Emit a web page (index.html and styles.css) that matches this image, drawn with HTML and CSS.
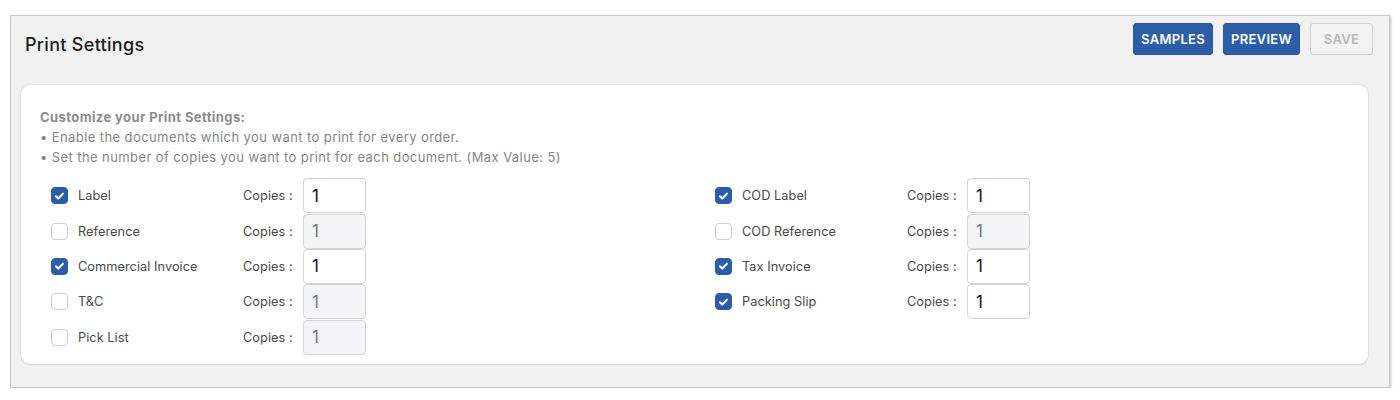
FILE: index.html
```html
<!DOCTYPE html>
<html>
<head>
<meta charset="utf-8">
<link rel="stylesheet" href="styles.css">
</head>
<body>
<div class="panel">
  <div class="header">
    <h1 class="title">Print Settings</h1>
    <div class="actions">
      <button class="btn btn-primary">SAMPLES</button>
      <button class="btn btn-primary">PREVIEW</button>
      <button class="btn btn-disabled">SAVE</button>
    </div>
  </div>
  <div class="card">
    <div class="intro">
      <div class="intro-title">Customize your Print Settings:</div>
      <div class="intro-line">• Enable the documents which you want to print for every order.</div>
      <div class="intro-line">• Set the number of copies you want to print for each document. (Max Value: 5)</div>
    </div>
    <div class="columns">
      <div class="col">
        <div class="row"><span class="cb on"><svg viewBox="0 0 16 16"><path d="M4.2 8.3l2.5 2.4 5-5.2"/></svg></span><span class="name">Label</span><span class="copies">Copies :</span><span class="num">1</span></div>
        <div class="row"><span class="cb"></span><span class="name">Reference</span><span class="copies">Copies :</span><span class="num off">1</span></div>
        <div class="row"><span class="cb on"><svg viewBox="0 0 16 16"><path d="M4.2 8.3l2.5 2.4 5-5.2"/></svg></span><span class="name">Commercial Invoice</span><span class="copies">Copies :</span><span class="num">1</span></div>
        <div class="row"><span class="cb"></span><span class="name">T&amp;C</span><span class="copies">Copies :</span><span class="num off">1</span></div>
        <div class="row"><span class="cb"></span><span class="name">Pick List</span><span class="copies">Copies :</span><span class="num off">1</span></div>
      </div>
      <div class="col col-right">
        <div class="row"><span class="cb on"><svg viewBox="0 0 16 16"><path d="M4.2 8.3l2.5 2.4 5-5.2"/></svg></span><span class="name">COD Label</span><span class="copies">Copies :</span><span class="num">1</span></div>
        <div class="row"><span class="cb"></span><span class="name">COD Reference</span><span class="copies">Copies :</span><span class="num off">1</span></div>
        <div class="row"><span class="cb on"><svg viewBox="0 0 16 16"><path d="M4.2 8.3l2.5 2.4 5-5.2"/></svg></span><span class="name">Tax Invoice</span><span class="copies">Copies :</span><span class="num">1</span></div>
        <div class="row"><span class="cb on"><svg viewBox="0 0 16 16"><path d="M4.2 8.3l2.5 2.4 5-5.2"/></svg></span><span class="name">Packing Slip</span><span class="copies">Copies :</span><span class="num">1</span></div>
      </div>
    </div>
  </div>
</div>
</body>
</html>
```

FILE: styles.css
```css
* { box-sizing: border-box; }
html, body { margin: 0; padding: 0; background: #fff; }
body {
  font-family: Inter, "Noto Sans", "Liberation Sans", sans-serif;
  color: #333;
  padding: 15px 10px 0 10px;
}
.panel {
  width: 1380px;
  height: 373px;
  background: #f1f1f1;
  border: 1px solid #c8c8c8;
  box-shadow: 1px 1px 2px rgba(0,0,0,0.25);
  display: flex;
  flex-direction: column;
}
.header {
  display: flex;
  align-items: flex-start;
  justify-content: space-between;
  padding: 7px 16px 0 14px;
  height: 69px;
}
.title {
  margin: 0;
  margin-top: 11px;
  font-size: 18px;
  font-weight: 500;
  color: #1c1c1c;
  letter-spacing: 0.3px;
}
.actions { display: flex; gap: 10px; }
.btn {
  height: 32px;
  border-radius: 3px;
  font-family: inherit;
  font-size: 13px;
  font-weight: 600;
  letter-spacing: 0.3px;
  padding: 0;
  border: 1px solid transparent;
}
.btn-primary {
  background: #2c5ea8;
  border-color: #2a589e;
  color: #fff;
}
.btn-primary:first-child { width: 80px; }
.btn-primary:nth-child(2) { width: 77px; }
.btn-disabled {
  width: 63px;
  background: #f3f3f3;
  border-color: #cfcfcf;
  color: #b9b9b9;
}
.card {
  margin: 0 21px 0 10px;
  height: 279px;
  background: #fff;
  border-radius: 9px;
  box-shadow: 0 0 2px rgba(0,0,0,0.18), 0 1px 2px rgba(0,0,0,0.08);
  padding: 22px 19px 0 19px;
}
.intro { font-size: 13px; line-height: 20px; color: #8a8a8a; letter-spacing: 0.41px; }
.intro-title { font-weight: 700; color: #8c8c8c; }
.intro-line { color: #858585; }
.columns {
  display: grid;
  grid-template-columns: 664px 1fr;
  margin-top: 11px;
  padding-left: 11px;
}
.row {
  display: flex;
  align-items: center;
  height: 35.4px;
  font-size: 12.75px;
  color: #4a4a4a;
  letter-spacing: 0.05px;
}
.cb {
  width: 17px;
  height: 17px;
  border: 1px solid #cfcfcf;
  border-radius: 4px;
  background: #fff;
  display: flex;
  align-items: center;
  justify-content: center;
  flex: none;
}
.cb.on { background: #2c5ea8; border-color: #2c5ea8; }
.cb svg { width: 16px; height: 16px; fill: none; stroke: #fff; stroke-width: 2.2; stroke-linecap: round; stroke-linejoin: round; }
.name { margin-left: 10px; width: 165px; }
.copies { width: 60px; color: #4a4a4a; }
.num {
  width: 63px;
  height: 35px;
  border: 1px solid #d4d4d4;
  border-radius: 4px;
  background: #fff;
  font-size: 17px;
  color: #111;
  padding-left: 8px;
  display: flex;
  align-items: center;
}
.num.off { background: #f4f5f7; color: #777; }
```
